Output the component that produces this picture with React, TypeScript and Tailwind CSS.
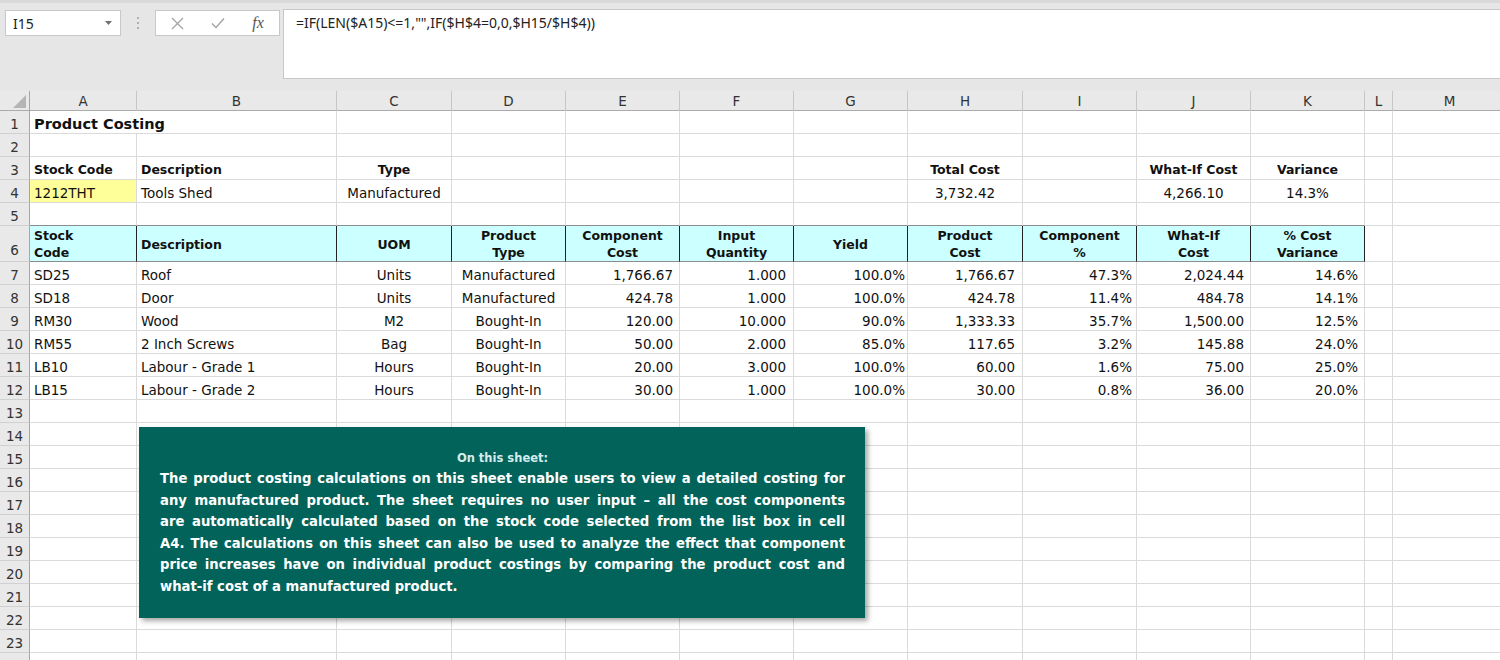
import React from "react";

// column template: row header, A..M
const COLS =
  "grid grid-cols-[30px_107px_200px_115px_114px_114px_114px_114px_115px_114px_114px_114px_28px_114px]";

const LETTERS = ["A", "B", "C", "D", "E", "F", "G", "H", "I", "J", "K", "L", "M"];

type Cell = {
  t?: React.ReactNode;
  a?: "l" | "c" | "r";
  cls?: string;
};

const alignCls = { l: "justify-start pl-[4px]", c: "justify-center", r: "justify-end" };

// right padding of the numeric columns (E..K)
const PR: Record<number, string> = {
  4: "pr-[6px]",
  5: "pr-[7px]",
  6: "pr-[2px]",
  7: "pr-[7px]",
  8: "pr-[4px]",
  9: "pr-[6px]",
  10: "pr-[6px]",
};

function RowHead({ n, bottom }: { n: number | string; bottom?: boolean }) {
  return (
    <div
      className={`flex justify-center items-end leading-[18px] bg-[#e9e9e9] border-r border-r-[#a6a6a6] border-b border-b-[#d0d0d0] text-[#333] text-[13.5px] ${
        bottom ? "pb-[2px]" : ""
      }`}
    >
      {n}
    </div>
  );
}

function Row({
  n,
  h,
  cells,
  rowCls,
}: {
  n: number;
  h: string;
  cells: Cell[];
  rowCls?: string;
}) {
  return (
    <div className={`${COLS} ${h} ${rowCls ?? ""}`}>
      <RowHead n={n} />
      {LETTERS.map((_, i) => {
        const c = cells[i] ?? {};
        return (
          <div
            key={i}
            className={`flex items-end leading-[18px] whitespace-nowrap border-r border-b border-[#dadada] ${
              alignCls[c.a ?? "l"]
            } ${c.a === "r" ? PR[i] ?? "pr-[4px]" : ""} ${c.cls ?? ""}`}
          >
            {c.t}
          </div>
        );
      })}
    </div>
  );
}

const data = [
  ["SD25", "Roof", "Units", "Manufactured", "1,766.67", "1.000", "100.0%", "1,766.67", "47.3%", "2,024.44", "14.6%"],
  ["SD18", "Door", "Units", "Manufactured", "424.78", "1.000", "100.0%", "424.78", "11.4%", "484.78", "14.1%"],
  ["RM30", "Wood", "M2", "Bought-In", "120.00", "10.000", "90.0%", "1,333.33", "35.7%", "1,500.00", "12.5%"],
  ["RM55", "2 Inch Screws", "Bag", "Bought-In", "50.00", "2.000", "85.0%", "117.65", "3.2%", "145.88", "24.0%"],
  ["LB10", "Labour - Grade 1", "Hours", "Bought-In", "20.00", "3.000", "100.0%", "60.00", "1.6%", "75.00", "25.0%"],
  ["LB15", "Labour - Grade 2", "Hours", "Bought-In", "30.00", "1.000", "100.0%", "30.00", "0.8%", "36.00", "20.0%"],
];

const headers: { t: React.ReactNode; a: "l" | "c" }[] = [
  { t: <>Stock<br />Code</>, a: "l" },
  { t: "Description", a: "l" },
  { t: "UOM", a: "c" },
  { t: <>Product<br />Type</>, a: "c" },
  { t: <>Component<br />Cost</>, a: "c" },
  { t: <>Input<br />Quantity</>, a: "c" },
  { t: "Yield", a: "c" },
  { t: <>Product<br />Cost</>, a: "c" },
  { t: <>Component<br />%</>, a: "c" },
  { t: <>What-If<br />Cost</>, a: "c" },
  { t: <>% Cost<br />Variance</>, a: "c" },
];

const bodyLines = [
  "The product costing calculations on this sheet enable users to view a detailed costing for",
  "any manufactured product. The sheet requires no user input \u2013 all the cost components",
  "are automatically calculated based on the stock code selected from the list box in cell",
  "A4. The calculations on this sheet can also be used to analyze the effect that component",
  "price increases have on individual product costings by comparing the product cost and",
];

function FormulaBar() {
  return (
    <div className="h-[91px] bg-[#e6e6e6] border-t-[3px] border-t-[#d9d9d9] flex items-start pt-[6px] font-['Noto_Sans',sans-serif]">
      <div className="ml-[5px] mt-[1px] w-[116px] h-[26px] bg-white border border-[#c8c8c8] flex items-center justify-between pl-[7px] pr-[8px] text-[14px] text-[#222]">
        <span>I15</span>
        <svg width="7" height="4" viewBox="0 0 7 4">
          <path d="M0 0h7L3.5 4z" fill="#707070" />
        </svg>
      </div>
      <div className="w-[34px] h-[28px] flex flex-col items-center justify-center gap-[3px]">
        <span className="w-[2px] h-[2px] bg-[#b0b0b0]" />
        <span className="w-[2px] h-[2px] bg-[#b0b0b0]" />
        <span className="w-[2px] h-[2px] bg-[#b0b0b0]" />
      </div>
      <div className="mt-[1px] w-[125px] h-[26px] bg-white border border-[#c8c8c8] flex items-center">
        <div className="w-[42px] flex justify-center">
          <svg width="13" height="13" viewBox="0 0 13 13">
            <path d="M1 1l11 11M12 1L1 12" stroke="#a3a3a3" strokeWidth="1.3" />
          </svg>
        </div>
        <div className="w-[40px] flex justify-center">
          <svg width="14" height="12" viewBox="0 0 14 12">
            <path d="M1 6.5l4 4L13 1.5" stroke="#a3a3a3" strokeWidth="1.4" fill="none" />
          </svg>
        </div>
        <div className="w-[40px] flex justify-center font-['Liberation_Serif',serif] italic text-[16px] text-[#555] leading-none">
          fx
        </div>
      </div>
      <div className="ml-[3px] flex-1 h-[70px] bg-white border-l border-y border-[#c8c8c8] pl-[12px] pt-[2px] text-[14px] text-[#222]">
        =IF(LEN($A15)&lt;=1,"",IF($H$4=0,0,$H15/$H$4))
      </div>
    </div>
  );
}

function ColumnHeader() {
  return (
    <div className={`${COLS} h-[20px] bg-[#e9e9e9] border-b border-b-[#ababab]`}>
      <div className="relative border-r border-r-[#a6a6a6]">
        <svg className="absolute right-[3px] bottom-[3px]" width="13" height="13" viewBox="0 0 13 13">
          <path d="M13 0v13H0z" fill="#b5b5b5" />
        </svg>
      </div>
      {LETTERS.map((l) => (
        <div
          key={l}
          className="flex items-center justify-center text-[13.5px] text-[#333] border-r border-r-[#c6c6c6]"
        >
          {l}
        </div>
      ))}
    </div>
  );
}

export default function App() {
  const blankRows = Array.from({ length: 12 }, (_, i) => 13 + i);
  return (
    <div className="w-[1500px] h-[660px] overflow-hidden bg-white relative font-['DejaVu_Sans',sans-serif] text-[13.5px] text-[#111]">
      <FormulaBar />
      <ColumnHeader />

      <Row
        n={1}
        h="h-[23px]"
        cells={[
          {
            t: <span className="font-bold text-[14.5px] relative z-10">Product Costing</span>,
            cls: "border-r-0 overflow-visible",
          },
        ]}
      />
      <Row n={2} h="h-[23px]" cells={[]} />
      <Row
        n={3}
        h="h-[23px]"
        cells={[
          { t: "Stock Code", cls: "font-bold text-[12.5px]" },
          { t: "Description", cls: "font-bold text-[12.5px]" },
          { t: "Type", a: "c", cls: "font-bold text-[12.5px]" },
          {},
          {},
          {},
          {},
          { t: "Total Cost", a: "c", cls: "font-bold text-[12.5px]" },
          {},
          { t: "What-If Cost", a: "c", cls: "font-bold text-[12.5px]" },
          { t: "Variance", a: "c", cls: "font-bold text-[12.5px]" },
        ]}
      />
      <Row
        n={4}
        h="h-[23px]"
        cells={[
          { t: "1212THT", cls: "bg-[#ffff99]" },
          { t: "Tools Shed" },
          { t: "Manufactured", a: "c" },
          {},
          {},
          {},
          {},
          { t: "3,732.42", a: "c" },
          {},
          { t: "4,266.10", a: "c" },
          { t: "14.3%", a: "c" },
        ]}
      />
      <Row
        n={5}
        h="h-[23px]"
        cells={Array.from({ length: 11 }, () => ({ cls: "border-b-[#8c8c8c]" }))}
      />

      {/* table header */}
      <div className={`${COLS} h-[36px]`}>
        <RowHead n={6} bottom />
        {headers.map((hd, i) => (
          <div
            key={i}
            className={`flex items-center bg-[#ccffff] border-r border-r-[#222] border-b border-b-[#8c8c8c] font-bold text-[12.5px] leading-[17px] pt-[1px] ${
              hd.a === "l" ? "justify-start text-left pl-[4px]" : "justify-center text-center"
            }`}
          >
            <div>{hd.t}</div>
          </div>
        ))}
        <div className="border-r border-b border-[#dadada]" />
        <div className="border-r border-b border-[#dadada]" />
      </div>

      {data.map((r, idx) => (
        <Row
          key={idx}
          n={7 + idx}
          h="h-[23px]"
          cells={r.map((v, i) => ({
            t: v,
            a: i < 2 ? "l" : i < 4 ? "c" : "r",
          }))}
        />
      ))}

      {blankRows.map((n) => (
        <Row key={n} n={n} h="h-[23px]" cells={[]} />
      ))}

      {/* text box over the sheet */}
      <div className="absolute left-[139px] top-[427px] w-[726px] h-[191px] bg-[#02635a] shadow-[3px_3px_5px_rgba(0,0,0,0.35)] pt-[23px] pl-[21px] pr-[20px]">
        <div className="text-center font-bold text-[11.5px] leading-[16px] text-[#d5ecea]">
          On this sheet:
        </div>
        <div className="mt-[2px] font-bold text-[13.2px] leading-[21.6px] text-white">
          {bodyLines.map((l, i) => (
            <div key={i} className="whitespace-nowrap text-justify [text-align-last:justify]">
              {l}
            </div>
          ))}
          <div className="whitespace-nowrap">what-if cost of a manufactured product.</div>
        </div>
      </div>
    </div>
  );
}
